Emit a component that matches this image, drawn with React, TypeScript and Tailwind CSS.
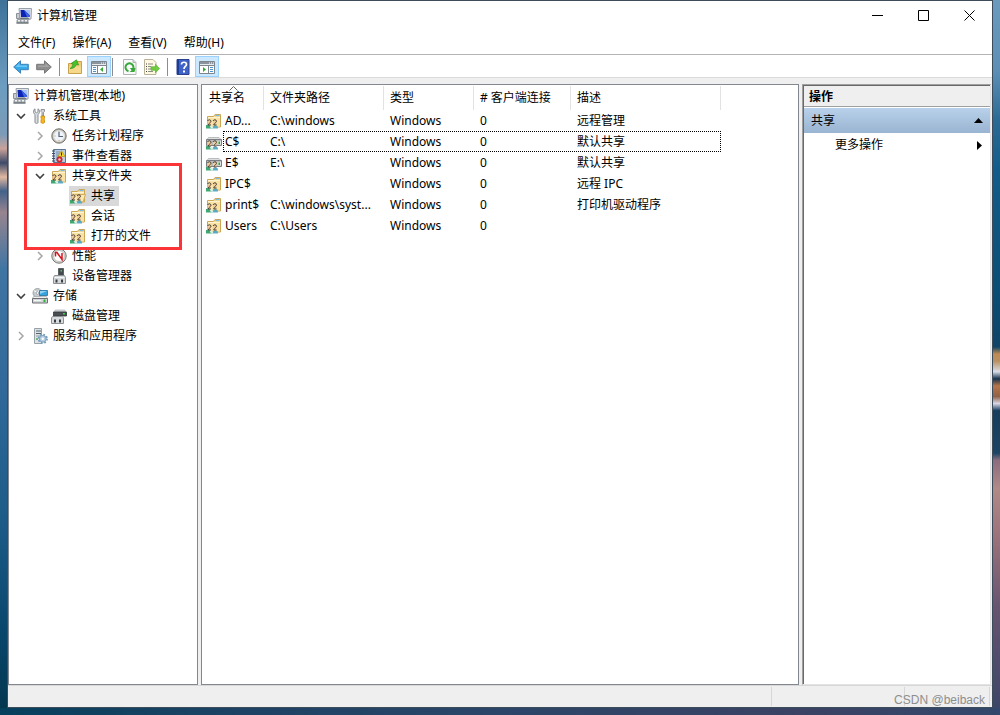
import React from 'react';

const ComputerIcon: React.FC = () => (
  <svg width="16" height="16" viewBox="0 0 16 16" className="shrink-0">
    <path d="M0.500 5.500h3v5h-3z" fill="#c9cdd2" stroke="#8b9096" />
    <path d="M3 0.500h12.500l-.5 10.500H4z" fill="#dfe3e8" stroke="#98a0ab" />
    <path d="M4.500 2h9.500v7H5z" fill="#0c23b4" />
    <path d="M8 2h6v5.500z" fill="#a5c2f7" />
    <path d="M8 2l6 5.500V9h-3z" fill="#3c63e4" />
    <path d="M5 9.500h7l2 2H3z" fill="#6b757d" />
    <path d="M1.500 11h10l1 1.500v3h-12v-3z" fill="#9aa1a6" />
    <path d="M2 12h2v1.500H2zM5.500 12h2v1.500h-2zM9 12h2v1.500H9z" fill="#f1f3f5" />
    <path d="M0.500 14.500h12v1H0.500z" fill="#5b6368" />
  </svg>
);

const ToolsIcon: React.FC = () => (
  <svg width="16" height="16" viewBox="0 0 16 16" className="shrink-0">
    <path d="M3 0.800v3l1.500 1L6 3.800v-3c2 1.200 2 4.400 0 5.600V14.500c0 1.200-3 1.200-3 0V6.400C1 5.200 1 2 3 0.800z" fill="#dcdfe2" stroke="#7c8288" strokeWidth="0.900" />
    <path d="M9 1.500h3.500v2l-1 1V8h-1.500V4.500l-1-1z" fill="#d2d5d8" stroke="#7c8288" strokeWidth="0.800" />
    <path d="M9 8h3.500v2l-.5 1 .5 1v2.500c0 1-3.500 1-3.500 0V12l.5-1-.5-1z" fill="#f8b51e" stroke="#c98a10" strokeWidth="0.800" />
  </svg>
);

const ClockIcon: React.FC = () => (
  <svg width="16" height="16" viewBox="0 0 16 16" className="shrink-0">
    <circle cx="8" cy="8" r="7.200" fill="#b5b5b3" stroke="#77736d" strokeWidth="1" />
    <circle cx="8" cy="8" r="5.500" fill="#eef4fb" stroke="#dcd9cf" strokeWidth="1" />
    <path d="M8 3.500V8.500H12" fill="none" stroke="#5a6470" strokeWidth="1.200" />
    <path d="M3.500 8h1M8 12v1" stroke="#c79d45" />
  </svg>
);

const EventIcon: React.FC = () => (
  <svg width="16" height="16" viewBox="0 0 16 16" className="shrink-0">
    <path d="M2.500 1.500h12v13h-12z" fill="#bccde2" stroke="#5c7392" />
    <path d="M5 4h4M5 6h3M5 8h3M5 10h2M5 12h1" stroke="#6f8cb5" />
    <path d="M1 3h3M1 5.500h3M1 8h3M1 10.500h3M1 13h3" stroke="#3a4e6b" />
    <path d="M10.500 2.500l3.500 6H7z" fill="#f9d62b" stroke="#b89413" strokeWidth="0.700" />
    <path d="M10.500 4.500v3" stroke="#222" />
    <circle cx="8.500" cy="11.500" r="3" fill="#d2232a" />
    <circle cx="8.500" cy="11.500" r="1.200" fill="#f6c9c9" />
  </svg>
);

const SharePeople: React.FC = () => (
  <g>
    <path d="M0 15.500v-3.500h3.500l3 3.500z" fill="#3fa873" />
    <path d="M6 15.500c.5-2 1.500-3 3.500-3s2.500 1 2.500 3z" fill="#5aa9c4" />
    <path d="M3.500 12.500h2.500l1.500 3H5z" fill="#d9efe4" />
    <path d="M1.500 7h3.500v5H1.500zM7 7h3.500v5H7z" fill="#f0cb9c" />
    <path d="M1.500 8C2 6.300 5 6.300 5 8.300c0 1.300-2.500 2-2.800 3.700H5M7 8c.5-1.700 3.500-1.700 3.500.3 0 1.300-2.500 2-2.800 3.700h2.800" fill="none" stroke="#4d4235" strokeWidth="1" />
  </g>
);

const ShareFolderIcon: React.FC<{ open?: boolean }> = ({ open }) => (
  <svg width="16" height="16" viewBox="0 0 16 16" className="shrink-0">
    <path d="M1.500 3.500h6l1.500-2h5.500v12.500h-13z" fill="#f3da91" stroke="#cda653" />
    <path d="M9.500 2.500h4" stroke="#7dbbe6" strokeWidth="1.200" />
    <path d="M2 5h12v8.500H2z" fill="#f8e3a4" />
    <path d="M2 4.500h12" stroke="#fdf3d2" />
    {open && <path d="M5 6.500h10.500l-2.500 7.500H3z" fill="#fbe9b0" stroke="#cda653" strokeWidth="0.900" />}
    <SharePeople />
  </svg>
);

const ShareDriveIcon: React.FC = () => (
  <svg width="16" height="16" viewBox="0 0 16 16" className="shrink-0">
    <path d="M2.500 3.500h10.500l2.500 2.500H0.500z" fill="#dcdedf" stroke="#a4a7a9" strokeWidth="0.700" />
    <path d="M0.500 5.500h15v6h-15z" fill="#b9bcbe" stroke="#7b7e80" />
    <path d="M11.500 7h3.500v3.500h-3.500z" fill="#e4e6e7" />
    <path d="M12.500 7.500h1.500v2.500h-1.500z" fill="#2fa12f" />
    <SharePeople />
  </svg>
);

const PerformanceIcon: React.FC = () => (
  <svg width="16" height="16" viewBox="0 0 16 16" className="shrink-0">
    <circle cx="8" cy="8" r="7.200" fill="#d8d8d6" stroke="#77736d" />
    <circle cx="8" cy="8" r="5.500" fill="#fff" stroke="#b5b5b2" strokeWidth="0.800" />
    <path d="M4.500 8.500V4.500h1.500l5 7V5" fill="none" stroke="#d3141c" strokeWidth="1.500" />
  </svg>
);

const DeviceIcon: React.FC = () => (
  <svg width="16" height="16" viewBox="0 0 16 16" className="shrink-0">
    <path d="M7.500 0.500h5V9h-5z" fill="#44494d" stroke="#5b6064" />
    <path d="M9.500 2h1.500v1.500H9.500z" fill="#47d05d" />
    <path d="M3.500 7.500h10l1 2v6h-12v-6z" fill="#d5d8da" stroke="#8b9094" />
    <path d="M4.500 11.500h2v3h-2zM10 11.500h2v3h-2z" fill="#3a3e42" />
    <path d="M3.500 9.500h10" stroke="#f3f4f5" />
  </svg>
);

const StorageIcon: React.FC = () => (
  <svg width="16" height="16" viewBox="0 0 16 16" className="shrink-0">
    <circle cx="5.500" cy="5" r="4.500" fill="#c4cbd1" stroke="#8f969c" strokeWidth="0.800" />
    <path d="M5.500 5L2 2.500M5.500 5L8 1.500" stroke="#fff" />
    <circle cx="5.500" cy="5" r="1.300" fill="#fff" stroke="#8f969c" strokeWidth="0.700" />
    <path d="M7.500 2.500h8v5h-8z" fill="#35a4dc" stroke="#22719c" strokeWidth="0.800" />
    <path d="M8 3h7L8 6z" fill="#91d5f4" />
    <path d="M1.500 8.500h13l1 2H0.500z" fill="#eceeef" stroke="#a3a7aa" strokeWidth="0.700" />
    <path d="M0.500 10.500h15v4.500h-15z" fill="#d3d6d8" stroke="#6d7174" />
    <path d="M11.500 11.500h2v2.500h-2z" fill="#27b52f" />
    <path d="M2 12.500h7" stroke="#f5f6f6" />
  </svg>
);

const DiskIcon: React.FC = () => (
  <svg width="16" height="16" viewBox="0 0 16 16" className="shrink-0">
    <path d="M4 1.500h10l1.500 2.500h-13z" fill="#c6cacc" />
    <path d="M2.500 4h13v4h-13z" fill="#4a4e51" stroke="#333638" strokeWidth="0.800" />
    <path d="M12 5h2v1.500h-2z" fill="#40cc4c" />
    <path d="M1.500 8.500h10l1 1.500v5.500h-12V10z" fill="#d8dbdd" stroke="#8b9094" />
    <path d="M3 11.500h2v3H3zM8 11.500h2v3H8z" fill="#3a3e42" />
  </svg>
);

const ServicesIcon: React.FC = () => (
  <svg width="16" height="16" viewBox="0 0 16 16" className="shrink-0">
    <path d="M2.500 0.500h7v15h-7z" fill="#dde2e5" stroke="#98a1a7" />
    <path d="M4 3h5M4 5.500h5" stroke="#56626b" />
    <path d="M4 8h4" stroke="#8f9aa2" />
    <path d="M4 11h2" stroke="#56a856" strokeWidth="1.500" />
    <circle cx="10.800" cy="10.800" r="4.200" fill="none" stroke="#6d97bb" strokeWidth="1.800" strokeDasharray="1.700 1.600" />
    <circle cx="10.800" cy="10.800" r="3.400" fill="#b3cde0" stroke="#7da2bf" />
    <circle cx="10.800" cy="10.800" r="1.200" fill="#fff" />
  </svg>
);

const BackIcon: React.FC = () => (
  <svg width="16" height="16" viewBox="0 0 16 16">
    <path d="M0.700 8L7.500 1.800v3.500h7.800v5.400H7.500v3.500z" fill="#35aae8" stroke="#3b82ba" />
    <path d="M2.500 8l4-3.700v2.200H14V8z" fill="#6cc8f5" />
  </svg>
);

const ForwardIcon: React.FC = () => (
  <svg width="16" height="16" viewBox="0 0 16 16">
    <path d="M15.300 8L8.500 1.800v3.500H0.700v5.400h7.800v3.500z" fill="#8e8e8e" stroke="#777" />
    <path d="M13.500 8l-4-3.700v2.200H2V8z" fill="#a3a3a3" />
  </svg>
);

const FolderUpIcon: React.FC = () => (
  <svg width="16" height="16" viewBox="0 0 16 16">
    <path d="M1.500 4.500h6l1.500-2h5.500v12h-13z" fill="#eecb74" stroke="#c9a14c" />
    <path d="M2 7.500h12v6.500H2z" fill="#f5d88c" />
    <path d="M3 9.500C4.500 9 5.500 7 6 5L4 4.500 9.500 0.800 11.500 6l-2-.5C8.500 8 6 9.800 3 9.500z" fill="#46c22c" stroke="#2f9420" strokeWidth="0.700" />
  </svg>
);

const PaneIcon: React.FC<{ flip?: boolean }> = ({ flip }) => (
  <svg width="16" height="16" viewBox="0 0 16 16">
    <path d="M0.500 2.500h15v12h-15z" fill="#fff" stroke="#7d858d" />
    <path d="M1 3h14v2H1z" fill="#8b949d" />
    <path d="M10 4h1M12 4h1M14 4h1" stroke="#fff" />
    <path d="M1 5.500h14" stroke="#e6eaed" />
    <path d="M1 6.500h14" stroke="#7d858d" />
    {flip ? (
      <g>
        <path d="M9.500 7v7.500" stroke="#7d858d" />
        <path d="M11 8.500h3M11 10.500h3M11 12.500h3" stroke="#4e91cf" />
        <path d="M4 8v5l3-2.500z" fill="#2faa2f" />
      </g>
    ) : (
      <g>
        <path d="M6.500 7v7.500" stroke="#7d858d" />
        <path d="M2 8.500h3M2 10.500h3M2 12.500h3" stroke="#4e91cf" />
        <path d="M12 8v5l-3-2.500z" fill="#2faa2f" />
      </g>
    )}
  </svg>
);

const RefreshIcon: React.FC = () => (
  <svg width="16" height="16" viewBox="0 0 16 16">
    <path d="M1.500 0.500h9.500l3 3v12H1.500z" fill="#f9fafa" stroke="#b0b4b7" />
    <path d="M11 0.500v3h3" fill="#d8dcdf" stroke="#b0b4b7" />
    <path d="M6.500 12.200A4 4 0 1 1 11.300 9.500" fill="none" stroke="#39a83a" strokeWidth="2" />
    <path d="M8 9h5.500l-1 4H7.500l2-1.500z" fill="#39a83a" />
  </svg>
);

const ExportIcon: React.FC = () => (
  <svg width="16" height="16" viewBox="0 0 16 16">
    <path d="M0.500 0.500h8.500l3 3v12H0.500z" fill="#fdf8df" stroke="#b8b29b" />
    <path d="M4 5h5M4 7.500h3M4 10h3M4 12.500h5" stroke="#8d8d88" />
    <path d="M2 5h1M2 7.500h1M2 10h1M2 12.500h1" stroke="#444" />
    <path d="M7 7.800h4.500V5.200l4 4.300-4 4.300v-2.600H7z" fill="#72cc3f" stroke="#5ab13a" strokeWidth="0.700" />
  </svg>
);

const HelpIcon: React.FC = () => (
  <svg width="16" height="16" viewBox="0 0 16 16">
    <path d="M2 0.500h12v15H2z" fill="#3f62c8" stroke="#2a4190" />
    <path d="M2 1h2v14H2z" fill="#1c3c9a" />
    <path d="M6.500 5.500c0-3 5-3 5 0 0 2-2.500 2-2.500 4.500" fill="none" stroke="#fff" strokeWidth="1.700" />
    <path d="M8 11.500h2v2H8z" fill="#fff" />
  </svg>
);

const Chevron: React.FC<{ open: boolean }> = ({ open }) => (
  <svg width="10" height="10" viewBox="0 0 10 10">
    {open ? (
      <path d="M1 3l4 4 4-4" fill="none" stroke="#404040" strokeWidth="1.600" />
    ) : (
      <path d="M3 1l4 4-4 4" fill="none" stroke="#a6a6a6" strokeWidth="1.500" />
    )}
  </svg>
);

interface TreeItem {
  label: string;
  icon: React.ReactNode;
  indent: string;
  open?: boolean;
  selected?: boolean;
}

const tree: TreeItem[] = [
  { label: '系统工具', icon: <ToolsIcon />, indent: 'pl-1', open: true },
  { label: '任务计划程序', icon: <ClockIcon />, indent: 'pl-[23px]', open: false },
  { label: '事件查看器', icon: <EventIcon />, indent: 'pl-[23px]', open: false },
  { label: '共享文件夹', icon: <ShareFolderIcon />, indent: 'pl-[23px]', open: true },
  { label: '共享', icon: <ShareFolderIcon open />, indent: 'pl-[42px]', selected: true },
  { label: '会话', icon: <ShareFolderIcon />, indent: 'pl-[42px]' },
  { label: '打开的文件', icon: <ShareFolderIcon />, indent: 'pl-[42px]' },
  { label: '性能', icon: <PerformanceIcon />, indent: 'pl-[23px]', open: false },
  { label: '设备管理器', icon: <DeviceIcon />, indent: 'pl-[23px]' },
  { label: '存储', icon: <StorageIcon />, indent: 'pl-1', open: true },
  { label: '磁盘管理', icon: <DiskIcon />, indent: 'pl-[23px]' },
  { label: '服务和应用程序', icon: <ServicesIcon />, indent: 'pl-1', open: false },
];

const shares = [
  { name: 'AD...', path: 'C:\\windows', desc: '远程管理' },
  { name: 'C$', path: 'C:\\', desc: '默认共享', drive: true, focused: true },
  { name: 'E$', path: 'E:\\', desc: '默认共享', drive: true },
  { name: 'IPC$', path: '', desc: '远程 IPC' },
  { name: 'print$', path: 'C:\\windows\\syst...', desc: '打印机驱动程序' },
  { name: 'Users', path: 'C:\\Users', desc: '' },
];

const TitleBar: React.FC = () => (
  <header className="flex h-[30px] pl-2">
    <div className="flex flex-1 items-center gap-[5px]">
      <ComputerIcon />
      <h1>计算机管理</h1>
    </div>
    <button aria-label="最小化" className="flex h-7 w-[46px] items-center justify-center">
      <svg width="11" height="11" viewBox="0 0 11 11"><path d="M0 5.500h11" stroke="#000" /></svg>
    </button>
    <button aria-label="最大化" className="flex h-7 w-[46px] items-center justify-center">
      <svg width="11" height="11" viewBox="0 0 11 11"><path d="M0.500 0.500h10v10h-10z" fill="none" stroke="#000" /></svg>
    </button>
    <button aria-label="关闭" className="flex h-7 w-[46px] items-center justify-center">
      <svg width="11" height="11" viewBox="0 0 11 11"><path d="M0.500 0.500l10 10M10.500 0.500l-10 10" stroke="#000" /></svg>
    </button>
  </header>
);

const Separator: React.FC = () => <div className="h-[18px] w-px bg-[#8d8d8d]"></div>;

const Toolbar: React.FC = () => (
  <div className="flex h-[23px] items-center border-b border-[#dadada] pl-[5px] pt-px">
    <button aria-label="后退"><BackIcon /></button>
    <button aria-label="前进" className="ml-[7px]"><ForwardIcon /></button>
    <div className="mx-[7px]"><Separator /></div>
    <button aria-label="向上一级"><FolderUpIcon /></button>
    <button aria-label="显示/隐藏控制台树" className="ml-1 flex h-[21px] w-6 items-center justify-center border border-[#99d1ff] bg-[#cce8ff]">
      <PaneIcon />
    </button>
    <div className="ml-px mr-[9px]"><Separator /></div>
    <button aria-label="刷新"><RefreshIcon /></button>
    <button aria-label="导出列表" className="ml-[6px]"><ExportIcon /></button>
    <div className="mx-[7px]"><Separator /></div>
    <button aria-label="帮助"><HelpIcon /></button>
    <button aria-label="显示/隐藏操作窗格" className="ml-1 flex h-[21px] w-6 items-center justify-center border border-[#99d1ff] bg-[#cce8ff]">
      <PaneIcon flip />
    </button>
  </div>
);

const TreePane: React.FC = () => (
  <nav className="relative w-[190px] border border-[#828790] bg-white pt-px leading-5">
    <button className="flex h-5 items-center gap-[5px] pl-1">
      <ComputerIcon />
      <span>计算机管理(本地)</span>
    </button>
    <ul>
      {tree.map((item) => (
        <li key={item.label} className={`flex h-5 items-center ${item.indent}`}>
          <span className="flex w-[18px] justify-center pr-[3px]">
            {item.open !== undefined && (
              <button aria-label={item.label} aria-expanded={item.open}><Chevron open={item.open} /></button>
            )}
          </span>
          <button className={`flex h-5 items-center gap-[5px] pl-px pr-1 ${item.selected ? 'bg-[#d9d9d9]' : ''}`}>
            {item.icon}
            <span>{item.label}</span>
          </button>
        </li>
      ))}
    </ul>
    <div className="pointer-events-none absolute left-[15px] top-[78px] h-[87px] w-[158px] border-3 border-[#fb3537]"></div>
  </nav>
);

const SharesPane: React.FC = () => (
  <main className="ml-[3px] min-w-0 flex-1 overflow-hidden border border-[#828790] bg-white pt-px">
    <table className="w-[519px] table-fixed border-separate border-spacing-0 text-left">
      <colgroup>
        <col className="w-[62px]" />
        <col className="w-[120px]" />
        <col className="w-[90px]" />
        <col className="w-[97px]" />
        <col className="w-[150px]" />
      </colgroup>
      <thead>
        <tr className="h-6">
          <th className="relative border-r border-[#e2e2e2] p-0 pl-[7px] font-normal">
            共享名
            <svg width="9" height="5" viewBox="0 0 9 5" className="absolute left-[27px] top-0">
              <path d="M0.500 4.500l4-4 4 4" fill="none" stroke="#666" />
            </svg>
          </th>
          <th className="border-r border-[#e2e2e2] p-0 pl-[6px] font-normal">文件夹路径</th>
          <th className="border-r border-[#e2e2e2] p-0 pl-[6px] font-normal">类型</th>
          <th className="border-r border-[#e2e2e2] p-0 pl-[6px] font-normal"># 客户端连接</th>
          <th className="border-r border-[#e2e2e2] p-0 pl-[6px] font-normal">描述</th>
        </tr>
      </thead>
      <tbody>
        {shares.map((share) => (
          <tr key={share.name} className="relative h-[21px] whitespace-nowrap">
            <td className="p-0 pl-1">
              <div className="flex items-center gap-[3px]">
                {share.drive ? <ShareDriveIcon /> : <ShareFolderIcon />}
                <span>{share.name}</span>
              </div>
              {share.focused && (
                <div className="absolute inset-y-0 left-[21px] right-0 border border-dotted border-black"></div>
              )}
            </td>
            <td className="p-0 pl-[6px]">{share.path}</td>
            <td className="p-0 pl-[6px]">Windows</td>
            <td className="p-0 pl-[6px]">0</td>
            <td className="p-0 pl-[6px]">{share.desc}</td>
          </tr>
        ))}
      </tbody>
    </table>
  </main>
);

const ActionsPane: React.FC = () => (
  <aside className="ml-[3px] mr-px flex w-[189px] border border-b-[#e3e3e3] border-l-[#a0a0a0] border-r-[#e3e3e3] border-t-[#a0a0a0]">
    <div className="flex-1 border-l border-t border-[#696969] bg-white">
      <h2 className="h-[21px] border-b border-[#a0a0a0] bg-[#efefef] pl-[5px] font-bold leading-[22px]">操作</h2>
      <button className="mt-px flex h-[25px] w-full items-center justify-between bg-linear-to-b from-[#b9d1ea] to-[#99b4d1] px-[7px]">
        <span>共享</span>
        <svg width="9" height="5" viewBox="0 0 9 5"><path d="M0 5l4.500-5L9 5z" fill="#000" /></svg>
      </button>
      <button className="flex h-6 w-full items-center justify-between pl-[31px] pr-2">
        <span>更多操作</span>
        <svg width="5" height="9" viewBox="0 0 5 9"><path d="M0 0l5 4.500L0 9z" fill="#000" /></svg>
      </button>
    </div>
  </aside>
);

const StatusBar: React.FC = () => (
  <footer className="flex h-[22px] justify-end border-t border-[#d7d7d7] bg-[#efefef] py-px pr-[2px]">
    <div className="w-[133px] border-l border-[#d7d7d7]"></div>
    <div className="w-[86px] border-x border-[#d7d7d7]"></div>
  </footer>
);

const App: React.FC = () => {
  return (
    <div className="relative flex h-screen flex-col bg-[#2a4365] font-['Noto_Sans','Noto_Sans_CJK_SC',sans-serif] text-xs text-black">
      <div className="flex min-h-0 flex-1">
        <div className="w-[7px] bg-[linear-gradient(to_bottom,#3f7299_0%,#6c9dc0_12%,#7c9bb8_19%,#c9a29a_21%,#3d4a68_23%,#e0b8a0_25%,#43618a_27%,#97848f_30%,#3f75a3_38%,#30699a_55%,#1b5a86_75%,#07456a_90%,#04384f_100%)]"></div>
        <div className="flex min-w-0 flex-1 flex-col border border-[#3c4c5a] bg-white">
          <TitleBar />
          <div className="flex h-6 items-center gap-[17px] border-b border-[#b4b4b4] pl-[10px]">
            <button>文件(F)</button>
            <button>操作(A)</button>
            <button>查看(V)</button>
            <button>帮助(H)</button>
          </div>
          <Toolbar />
          <div className="flex min-h-0 flex-1 bg-[#efefef] pt-[6px]">
            <TreePane />
            <SharesPane />
            <ActionsPane />
          </div>
          <StatusBar />
        </div>
        <div className="w-[7px] bg-[linear-gradient(to_bottom,#6b9abd_0%,#5d8fb5_10%,#2b6a95_17%,#135c89_24%,#0b4f77_40%,#0f4466_49%,#c08a55_50%,#b89162_51%,#d8dde6_52.500%,#17334d_53.500%,#b5754a_54.500%,#8f6247_56%,#d9d6e6_57%,#173c5c_58%,#1c4463_64%,#8b6d7e_65%,#b08a86_69%,#9a727a_76%,#665470_86%,#3d4668_100%)]"></div>
      </div>
      <div className="h-[7px] bg-[linear-gradient(to_right,#06405c_0%,#1b4263_20%,#2b4568_50%,#3b4263_80%,#33486c_100%)]"></div>
      <div className="absolute bottom-[7px] right-[15px] font-['Liberation_Sans',sans-serif] text-xs text-[#8e8e8e]">CSDN @beiback</div>
    </div>
  );
};

export default App;
